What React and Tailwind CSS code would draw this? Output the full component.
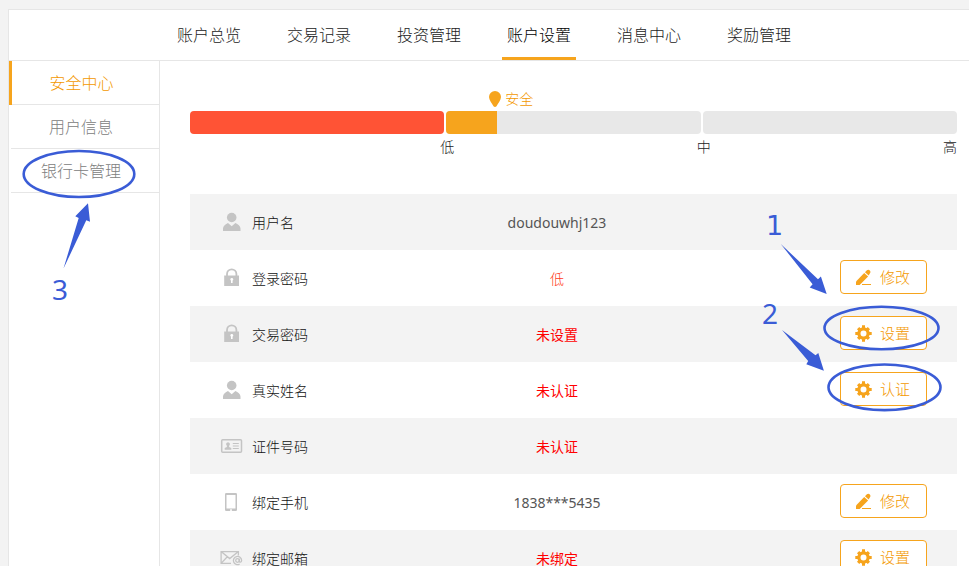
const NAV = ["账户总览", "交易记录", "投资管理", "账户设置", "消息中心", "奖励管理"];

const SIDE = ["安全中心", "用户信息", "银行卡管理"];

const ROWS = [
  { icon: "user", label: "用户名", value: "doudouwhj123", tone: "font-normal text-[#555]" },
  { icon: "lock", label: "登录密码", value: "低", tone: "text-[#ff3a1a]", action: "修改" },
  { icon: "lock", label: "交易密码", value: "未设置", tone: "font-normal text-[#ff0000]", action: "设置" },
  { icon: "user", label: "真实姓名", value: "未认证", tone: "font-normal text-[#ff0000]", action: "认证" },
  { icon: "card", label: "证件号码", value: "未认证", tone: "font-normal text-[#ff0000]" },
  { icon: "phone", label: "绑定手机", value: "1838***5435", tone: "font-normal text-[#555]", action: "修改" },
  { icon: "mail", label: "绑定邮箱", value: "未绑定", tone: "font-normal text-[#ff0000]", action: "设置" },
];

const ICONS = {
  user: (
    <g fill="#c4c4c4">
      <ellipse cx="11.700" cy="7.500" rx="4.800" ry="4.700" />
      <path d="M3 21v-2.500c0-2.600 2.600-4.500 5-5.500l3.700 3.300 3.700-3.300c2.500 1 5.100 2.900 5.100 5.500V21z" />
    </g>
  ),
  lock: (
    <g>
      <path d="M7 10.500V8a4.700 4.700 0 0 1 9.400 0v2.500" fill="none" stroke="#c4c4c4" strokeWidth="1.800" />
      <path fill="#c4c4c4" d="M4.200 9.500h14.800V20H4.200z" />
      <path fill="#fff" d="M11.800 12a1.400 1.400 0 0 1 .8 2.600V17h-1.600v-2.400a1.400 1.400 0 0 1 .8-2.600z" />
    </g>
  ),
  card: (
    <g>
      <rect x="1.700" y="5.700" width="19.800" height="12.600" rx="1" fill="none" stroke="#c4c4c4" strokeWidth="1.500" />
      <path fill="#c4c4c4" d="M8 8.200a2 2 0 0 1 1.100 3.600v1.200l2.200.9v1.900H4.700v-1.900L6.900 13v-1.200A2 2 0 0 1 8 8.200z" />
      <path d="M12.800 9.500h6M12.800 12h6M12.800 14.500h6" stroke="#c4c4c4" strokeWidth="1.100" />
    </g>
  ),
  phone: (
    <g>
      <path
        fillRule="evenodd"
        fill="#c4c4c4"
        d="M6.200 3h9.600a1.200 1.200 0 0 1 1.200 1.200v15.600a1.200 1.200 0 0 1-1.200 1.200H6.200A1.200 1.200 0 0 1 5 19.800V4.200A1.200 1.200 0 0 1 6.200 3zM6.500 5v13.500h9V5z"
      />
      <path fill="#fff" d="M10.200 19.200h1.600v1.800h-1.600z" />
    </g>
  ),
  mail: (
    <g fill="none" stroke="#c4c4c4" strokeWidth="1.300">
      <path d="M11 17.400H1.100V5.600h17.300v4M1.100 5.600l8.600 7 8.700-7M1.100 17.400l6.200-6.600" />
      <circle cx="17.500" cy="14.500" r="1.800" />
      <path d="M19.300 12.700v2.600c0 1.400 2.300 1.200 2.300-.9a4.100 4.100 0 1 0-2 3.700" />
    </g>
  ),
};

function Pencil() {
  return (
    <svg className="h-4 w-[17px]" viewBox="0 0 17 16" fill="#f6a41d" aria-hidden="true">
      <path d="M1 16v-3.500L9.200 4l3.900 3.500L4.600 16z" />
      <path d="M10 3.200l1.600-1.600c1-1 2.400-1 3.200-.1.900.8.900 2.100 0 3.100l-1.100 2z" />
      <path d="M7 15h9v1H7z" />
    </svg>
  );
}

function Gear() {
  return (
    <svg className="h-[17px] w-[17px]" viewBox="-8.500 -8.500 17 17" fill="none" stroke="#f6a41d" aria-hidden="true">
      <circle r="4.600" strokeWidth="3.200" />
      <path strokeWidth="3" d="M0-8.200V-5M0 5v3.200M-8.200 0H-5M5 0h3.200" />
      <path strokeWidth="3.200" d="M-5.400-5.400l2 2M5.400 5.400l-2-2M-5.400 5.400l2-2M5.400-5.400l-2 2" />
    </svg>
  );
}

function SecurityLevel() {
  return (
    <section aria-label="安全">
      <div className="grid grid-cols-3 gap-0.5">
        <div className="col-start-2 flex h-5 items-center gap-1 pl-[43px] text-sm text-[#f39800]">
          <svg className="h-4 w-3" viewBox="0 0 12 16" fill="#f6a41d" aria-hidden="true">
            <path d="M6 0a6 6 0 0 1 6 6c0 3-3 6.500-4.500 9.300Q6 16.700 4.500 15.300C3 12.500 0 9 0 6a6 6 0 0 1 6-6z" />
          </svg>
          安全
        </div>
      </div>
      <div className="mt-0.5 grid grid-cols-3 gap-0.5">
        <div className="h-[23px] rounded bg-[#ff5335]" />
        <div className="h-[23px] overflow-hidden rounded bg-[#e8e8e8]">
          <div className="h-full w-1/5 bg-[#f6a41d]" />
        </div>
        <div className="h-[23px] rounded bg-[#e8e8e8]" />
      </div>
      <div className="mt-[3px] grid grid-cols-3 gap-0.5 text-right text-sm text-[#222]">
        <span className="-mr-2.5">低</span>
        <span className="-mr-2.5">中</span>
        <span>高</span>
      </div>
    </section>
  );
}

function SettingsTable() {
  return (
    <table className="mt-[37px] w-full table-fixed text-sm text-[#111]">
      <colgroup>
        <col className="w-[230px]" />
        <col />
        <col className="w-[263px]" />
      </colgroup>
      <tbody>
        {ROWS.map((row) => (
          <tr key={row.label} className="h-14 odd:bg-[#f3f3f3]">
            <th scope="row" className="p-0 pt-0.5 pl-[30px] text-left font-light">
              <span className="flex items-center gap-2">
                <svg className="size-6" viewBox="0 1 24 24" aria-hidden="true">
                  {ICONS[row.icon]}
                </svg>
                {row.label}
              </span>
            </th>
            <td className={`p-0 pt-0.5 text-center ${row.tone}`}>{row.value}</td>
            <td className="p-0 pt-2.5 pr-[30px] align-top">
              {row.action && (
                <button
                  type="button"
                  className="ml-auto flex h-[34px] items-center gap-2 rounded border border-[#f6a41d] bg-white pr-4 pl-3.5 text-[15px] text-[#f39800]"
                >
                  {row.action === "修改" ? <Pencil /> : <Gear />}
                  <span className="pt-0.5">{row.action}</span>
                </button>
              )}
            </td>
          </tr>
        ))}
      </tbody>
    </table>
  );
}

function SideNotes() {
  return (
    <svg
      className="pointer-events-none absolute top-[84px] left-[6px] h-[165px] w-[135px] font-normal"
      viewBox="15 145 135 165"
      aria-hidden="true"
    >
      <ellipse cx="79" cy="174" rx="55.300" ry="23" fill="none" stroke="#3a5cd6" strokeWidth="2.600" />
      <path fill="#3a5cd6" d="M63.500 268.500L78.700 218l-3.400-1.700L88 203.300l2 18.400-3.700-1.400z" />
      <text x="52" y="300" fontSize="28" fill="#3a5cd6">3</text>
    </svg>
  );
}

function ActionNotes() {
  return (
    <svg
      className="pointer-events-none absolute top-[139px] right-0 h-[220px] w-[219px] font-normal"
      viewBox="750 200 219 220"
      aria-hidden="true"
    >
      <g fill="none" stroke="#3a5cd6" strokeWidth="2.600">
        <ellipse cx="881.500" cy="328" rx="57" ry="21.300" />
        <ellipse cx="884.500" cy="387.300" rx="56" ry="22.800" />
      </g>
      <g fill="#3a5cd6">
        <path d="M780.800 244L818 279.300l2.900-2.700 5.800 17.400-17-6.500 2.900-3.200z" />
        <path d="M782 330L815.500 355.300l2.800-2.300 5.600 17.800-17.600-6.500 1.900-3.300z" />
        <text x="766" y="235" fontSize="27" fontFamily="DejaVu Sans, sans-serif">1</text>
        <text x="762" y="324" fontSize="28">2</text>
      </g>
    </svg>
  );
}

export default function App() {
  return (
    <div className="min-h-screen bg-[#f3f3f3] pt-[9px] pl-2 font-['Noto_Sans','Noto_Sans_CJK_SC',sans-serif] font-light">
      <div className="flex min-h-screen flex-col border-t border-l border-[#e6e6e6] bg-white">
        <nav className="flex h-[51px] gap-9 border-b border-[#e6e6e6] pl-[163px] text-base">
          {NAV.map((item) => (
            <a
              key={item}
              href="#"
              className={
                item === "账户设置"
                  ? "h-[50px] border-b-3 border-[#f6a41d] px-[5px] leading-[50px] text-black"
                  : "h-[50px] px-[5px] leading-[50px] text-[#222]"
              }
            >
              {item}
            </a>
          ))}
        </nav>
        <div className="flex flex-1">
          <aside className="relative w-[151px] shrink-0 border-r border-[#e6e6e6] text-center text-base">
            {SIDE.map((item) => (
              <a
                key={item}
                href="#"
                className={
                  item === "安全中心"
                    ? "block border-l-3 border-[#f6a41d] text-[#f39800]"
                    : "block pl-0.5 text-[#808080]"
                }
              >
                <span className="block h-11 border-b border-[#e6e6e6] pr-2 leading-[44px]">{item}</span>
              </a>
            ))}
            <SideNotes />
          </aside>
          <main className="relative min-w-0 flex-1 pt-7 pr-3 pl-[30px]">
            <SecurityLevel />
            <SettingsTable />
            <ActionNotes />
          </main>
        </div>
      </div>
    </div>
  );
}
